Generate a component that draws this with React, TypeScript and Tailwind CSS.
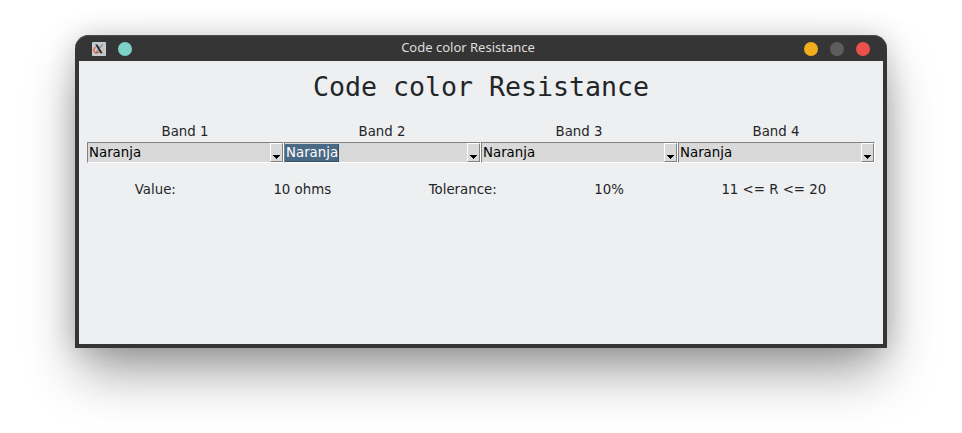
const bands = ["Band 1", "Band 2", "Band 3", "Band 4"];
const results = ["Value:", "10 ohms", "Tolerance:", "10%", "11 <= R <= 20"];

function XLogo() {
  return (
    <svg width="14" height="14" viewBox="0 0 14 14">
      <rect width="14" height="14" rx="0.8" fill="#c3c9cd" />
      <path d="M3.600 5.200C1.400 6.600 1.300 9.300 3 10.300c1.300.7 2.800.5 4-.1" fill="none" stroke="#ee6436" strokeWidth="1.4" />
      <path d="M11 5.600c1.200 1.500.4 4-2 5" fill="none" stroke="#dfb28b" strokeWidth="1" />
      <path d="M3.200 2.500h2.300l5.200 8.700H8.300z" fill="#2c2d2f" />
      <path d="M10.700 2.400 3.700 11.200" stroke="#4a4b4d" strokeWidth="0.8" />
    </svg>
  );
}

function ComboBox({ selected }: { selected: boolean }) {
  return (
    <div className="flex h-[21px] justify-between border border-t-[#828282] border-l-[#828282] border-r-white border-b-white bg-[#d9d9d9]">
      <div
        className={
          selected
            ? "mt-px h-[18px] w-[54px] border-r border-b border-[#2f4c68] bg-[#4a6984] pl-px leading-[17px] text-white"
            : "mt-px h-[18px] px-px leading-[17px] text-black"
        }
      >
        Naranja
      </div>
      <div className="flex w-[13px] items-end justify-center border border-t-white border-l-white border-r-[#828282] border-b-[#828282] pb-[2px]">
        <svg width="7" height="4" viewBox="0 0 7 4" shapeRendering="crispEdges">
          <path d="M0 0h7v1H6v1H5v1H4v1H3V3H2V2H1V1H0z" fill="#000" />
        </svg>
      </div>
    </div>
  );
}

export default function App() {
  return (
    <div className="flex h-[433px] w-[962px] justify-center overflow-hidden bg-white pt-[35px]">
      <div className="flex h-[313px] w-[812px] flex-col rounded-t-[14px] bg-[#353535] px-1 pb-1 shadow-[0_28px_54px_-6px_rgba(0,0,0,0.4),0_0_28px_rgba(0,0,0,0.16)]">
        <header className="-mx-1 flex h-[26px] shrink-0 items-center rounded-t-[14px] px-[17px] pt-[2px] shadow-[inset_0_1px_0_#4d4d4d]">
          <div className="flex w-[94px] items-center gap-3">
            <XLogo />
            <span className="size-[14px] rounded-full bg-[#7dd2c8]" />
          </div>
          <h1 className="flex-1 pb-[5px] text-center font-['Noto_Sans',sans-serif] text-[13px] leading-[18px] text-[#dedede]">
            Code color Resistance
          </h1>
          <div className="flex w-[120px] justify-end gap-3">
            <span className="size-[14px] rounded-full bg-[#f0ae1b]" />
            <span className="size-[14px] rounded-full bg-[#5d5d5d]" />
            <span className="size-[14px] rounded-full bg-[#eb524c]" />
          </div>
        </header>
        <main className="flex-1 bg-[#eeeff1] px-2 pt-2 font-['DejaVu_Sans',sans-serif] text-[13.333px] text-[#232629]">
          <h2 className="h-[52px] text-center font-['DejaVu_Sans_Mono',monospace] text-[26.6px] leading-[36px]">
            Code color Resistance
          </h2>
          <div className="grid grid-cols-4">
            {bands.map((band, i) => (
              <div key={band}>
                <div className="h-[21px] pr-px text-center leading-[22px]">{band}</div>
                <ComboBox selected={i === 1} />
              </div>
            ))}
          </div>
          <div className="mt-4 -ml-px flex justify-around leading-[22px]">
            {results.map((text) => (
              <span key={text}>{text}</span>
            ))}
          </div>
        </main>
      </div>
    </div>
  );
}
